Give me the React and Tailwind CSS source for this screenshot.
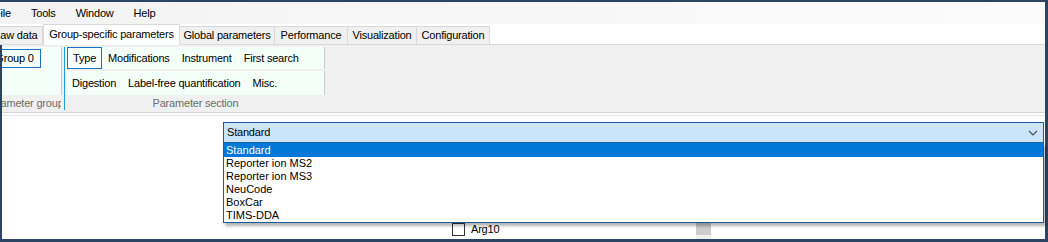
import React from 'react';

const menus = ['File', 'Tools', 'Window', 'Help'];

const tabs = [
  { label: 'Raw data', w: 'w-[55px] -ml-[12px]' },
  { label: 'Group-specific parameters', w: 'w-[137px]', active: true },
  { label: 'Global parameters', w: 'w-[95px]' },
  { label: 'Performance', w: 'w-[73px]' },
  { label: 'Visualization', w: 'w-[69px]' },
  { label: 'Configuration', w: 'w-[73px]' },
];

const options = ['Standard', 'Reporter ion MS2', 'Reporter ion MS3', 'NeuCode', 'BoxCar', 'TIMS-DDA'];

function RibbonItem({ label, selected }) {
  return (
    <div
      className={`h-full flex items-center px-[5px] border ${
        selected ? 'border-[#1a73c9]' : 'border-transparent'
      }`}
    >
      {label}
    </div>
  );
}

export default function App() {
  return (
    <div className="w-[1048px] h-[242px] overflow-hidden bg-[#2c4461] pt-[2px] pr-[3px] pb-[3px] font-['Liberation_Sans',Arial,sans-serif] text-[11px] tracking-[-0.2px] text-black">
      <div className="h-full flex flex-col">
        {/* Menu bar */}
        <div className="h-[22px] flex items-center bg-gradient-to-r from-[#f3f3f3] to-[#fbfbfb] overflow-hidden">
          <div className="flex -ml-[16px]">
            {menus.map((m) => (
              <div key={m} className="px-[10px] leading-[22px] whitespace-nowrap">
                {m}
              </div>
            ))}
          </div>
        </div>

        {/* Tabs */}
        <div className="h-[21px] flex items-end bg-white overflow-hidden">
          {tabs.map((t) =>
            t.active ? (
              <div
                key={t.label}
                className={`${t.w} shrink-0 h-[21px] bg-white border-t border-l border-r border-[#d9d9d9] flex items-center justify-center whitespace-nowrap pb-[1px]`}
              >
                {t.label}
              </div>
            ) : (
              <div
                key={t.label}
                className={`${t.w} shrink-0 h-[19px] bg-[#f0f0f0] border-t border-r border-b border-[#d9d9d9] flex items-center justify-center whitespace-nowrap`}
              >
                {t.label}
              </div>
            )
          )}
          <div className="flex-1 h-[19px] border-b border-[#d9d9d9]" />
        </div>

        {/* Body */}
        <div className="flex-1 flex flex-col ml-[2px] bg-white">
          {/* Ribbon */}
          <div className="h-[68px] shrink-0 bg-[#f0f0f0] border-b border-[#d6d6d6] pt-[2px] flex items-start">
            {/* Parameter group */}
            <div className="w-[59px] shrink-0 flex flex-col overflow-hidden">
              <div className="h-[48px] bg-[#f5fffa] pt-[2px]">
                <div className="-ml-[14px] w-[53px] h-[19px] border border-[#1a73c9] flex items-center justify-center whitespace-nowrap">
                  Group 0
                </div>
              </div>
              <div className="h-[17px] flex items-center -ml-[18px] whitespace-nowrap text-[#6d6d6d]">
                Parameter group
              </div>
            </div>
            <div className="w-px h-[48px] bg-[#c9c9c9] shrink-0" />
            <div className="w-[2px] shrink-0" />
            <div className="w-px h-[63px] bg-[#1e9be3] shrink-0" />
            <div className="w-px shrink-0" />

            {/* Parameter section */}
            <div className="w-[259px] shrink-0 flex flex-col">
              <div className="h-[22px] flex">
                <div className="flex-1 bg-[#f5fffa] flex items-stretch pl-px whitespace-nowrap">
                  <RibbonItem label="Type" selected />
                  <RibbonItem label="Modifications" />
                  <RibbonItem label="Instrument" />
                  <RibbonItem label="First search" />
                </div>
                <div className="w-px bg-[#c9c9c9]" />
              </div>
              <div className="h-[24px] mt-[2px] flex">
                <div className="flex-1 bg-[#f5fffa] flex items-stretch whitespace-nowrap">
                  <RibbonItem label="Digestion" />
                  <RibbonItem label="Label-free quantification" />
                  <RibbonItem label="Misc." />
                </div>
                <div className="w-px bg-[#c9c9c9]" />
              </div>
              <div className="h-[17px] flex items-center justify-center text-[#6d6d6d] whitespace-nowrap">
                Parameter section
              </div>
            </div>
          </div>

          {/* Content */}
          <div className="flex-1 bg-white pt-[2px]">
            <div className="border-t border-[#e6e6e6] pt-[6px]">
              <div className="relative ml-[221px] w-[821px]">
                <div className="h-[21px] bg-[#cce4f7] border border-[#1b5c9c] flex items-center justify-between pl-[3px] pr-[4px]">
                  <span>Standard</span>
                  <svg width="10" height="6" viewBox="0 0 10 6" className="mr-[1px]">
                    <polyline points="1,1 5,5 9,1" fill="none" stroke="#505050" strokeWidth="1.2" />
                  </svg>
                </div>
                <div className="absolute left-0 top-full w-full bg-white border-l border-r border-b border-[#1b5c9c] shadow-[2px_3px_3px_rgba(0,0,0,0.3)] z-10 tracking-normal">
                  {options.map((o, i) => (
                    <div
                      key={o}
                      className={`pl-[2px] flex items-center ${
                        i === 0 ? 'h-[14px] bg-[#0078d7] text-white' : 'h-[13px]'
                      }`}
                    >
                      {o}
                    </div>
                  ))}
                </div>
              </div>

              <div className="mt-[80px] h-[16px] flex items-start">
                <div className="ml-[450px] w-[13px] h-[13px] border border-[#333333] bg-white shrink-0" />
                <span className="ml-[6px] leading-[13px]">Arg10</span>
                <div className="ml-[197px] w-[15px] h-[16px] flex flex-col">
                  <div className="h-[12px] bg-[#cdcdcd]" />
                  <div className="flex-1 bg-[#f0f0f0]" />
                </div>
              </div>
            </div>
          </div>
        </div>
      </div>
    </div>
  );
}
